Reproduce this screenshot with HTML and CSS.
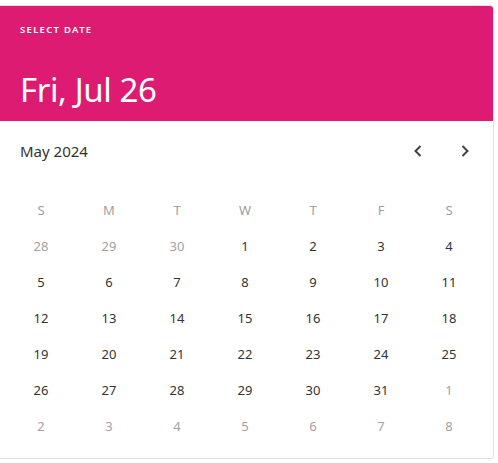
FILE: index.html
```html
<!DOCTYPE html>
<html>
<head>
<meta charset="utf-8">
<link rel="stylesheet" href="styles.css">
</head>
<body>
<div class="card">
  <div class="header">
    <div class="overline">SELECT DATE</div>
    <div class="title">Fri, Jul 26</div>
  </div>
  <div class="monthbar">
    <div class="month">May 2024</div>
    <div class="navs">
      <span class="nav"><svg width="24" height="24" viewBox="0 0 24 24"><path d="M14.5 7 L9.5 12 L14.5 17" fill="none" stroke="#424242" stroke-width="2"/></svg></span>
      <span class="nav"><svg width="24" height="24" viewBox="0 0 24 24"><path d="M9.5 7 L14.5 12 L9.5 17" fill="none" stroke="#424242" stroke-width="2"/></svg></span>
    </div>
  </div>
  <div class="grid">
    <span class="wd">S</span><span class="wd">M</span><span class="wd">T</span><span class="wd">W</span><span class="wd">T</span><span class="wd">F</span><span class="wd">S</span>
    <span class="d out">28</span><span class="d out">29</span><span class="d out">30</span><span class="d">1</span><span class="d">2</span><span class="d">3</span><span class="d">4</span>
    <span class="d">5</span><span class="d">6</span><span class="d">7</span><span class="d">8</span><span class="d">9</span><span class="d">10</span><span class="d">11</span>
    <span class="d">12</span><span class="d">13</span><span class="d">14</span><span class="d">15</span><span class="d">16</span><span class="d">17</span><span class="d">18</span>
    <span class="d">19</span><span class="d">20</span><span class="d">21</span><span class="d">22</span><span class="d">23</span><span class="d">24</span><span class="d">25</span>
    <span class="d">26</span><span class="d">27</span><span class="d">28</span><span class="d">29</span><span class="d">30</span><span class="d">31</span><span class="d out">1</span>
    <span class="d out">2</span><span class="d out">3</span><span class="d out">4</span><span class="d out">5</span><span class="d out">6</span><span class="d out">7</span><span class="d out">8</span>
  </div>
</div>
</body>
</html>
```
FILE: styles.css
```css
* { box-sizing: border-box; }
html, body { margin: 0; padding: 0; background: #fff; }
body { font-family: "Noto Sans", "DejaVu Sans", sans-serif; color: #333; }
.card {
  width: 494px;
  margin-top: 5px;
  border: 1px solid #e0e0e0;
  border-left: none;
  border-radius: 0 4px 4px 0;
  overflow: hidden;
  background: #fff;
  padding-bottom: 14px;
}
.header {
  background: #dd1b72;
  height: 115px;
  padding: 18px 20px 0 20px;
  color: #fff;
}
.overline {
  font-size: 9.5px;
  font-weight: 600;
  letter-spacing: 1.3px;
  line-height: 12px;
}
.title {
  margin-top: 32px;
  font-size: 33px;
  line-height: 44px;
  letter-spacing: -0.4px;
}
.monthbar {
  height: 60px;
  display: flex;
  align-items: center;
  justify-content: space-between;
  padding: 0 16px 0 20px;
}
.month { font-size: 15px; color: #333; }
.navs { display: flex; gap: 23px; }
.nav { display: flex; width: 24px; height: 24px; }
.grid {
  margin-top: 11px;
  margin-left: 7px;
  width: 476px;
  display: grid;
  grid-template-columns: repeat(7, 68px);
  grid-auto-rows: 36px;
}
.grid span {
  display: flex;
  align-items: center;
  justify-content: center;
  font-size: 13px;
}
.wd { color: #a0a0a0; }
.d { color: #333; }
.d.out { color: #a89ea2; }
```
